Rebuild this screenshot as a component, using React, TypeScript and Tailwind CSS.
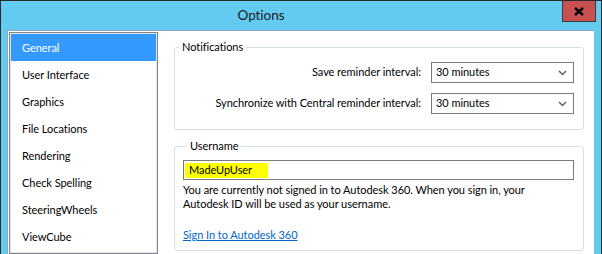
const pages = [
  'General',
  'User Interface',
  'Graphics',
  'File Locations',
  'Rendering',
  'Check Spelling',
  'SteeringWheels',
  'ViewCube',
];

function Chevron() {
  return (
    <svg width="9" height="6" viewBox="0 0 9 6" className="shrink-0">
      <polyline points="1,1 4.5,4.5 8,1" fill="none" stroke="#606060" strokeWidth="1.5" />
    </svg>
  );
}

function Select({ value }: { value: string }) {
  return (
    <div className="w-[143px] h-[21px] border border-[#7a7a7a] bg-white flex items-center justify-between pl-[4px] pr-[6px]">
      <span>{value}</span>
      <Chevron />
    </div>
  );
}

export default function App() {
  return (
    <div className="w-[602px] h-[254px] overflow-hidden bg-[#62cbef] border-t border-l border-r border-[#2b2b2b] flex flex-col font-['Lato',sans-serif] text-[11px] tracking-[-0.05px] text-black">
      {/* Title bar */}
      <div className="h-[29px] shrink-0 relative flex items-center justify-center pr-[80px]">
        <span className="text-[13.5px] text-[#1a1a1a]">Options</span>
        <div className="absolute top-[-1px] right-[5px] w-[34px] h-[22px] bg-[#c75050] border border-[#3c3c3c] flex items-center justify-center">
          <svg width="10" height="9" viewBox="0 0 10 9">
            <path d="M1,1 L9,8 M9,1 L1,8" stroke="#000" strokeWidth="2.4" />
          </svg>
        </div>
      </div>

      {/* Body */}
      <div className="flex-1 ml-[6px] mr-[7px] bg-white border-l border-t border-[#8fa9bb] flex">
        {/* Page list */}
        <div className="ml-[1px] mt-[1px] w-[149px] border border-[#828790] shrink-0">
          <div className="h-full border border-[#e3e3e3]">
            {pages.map((p, i) => (
              <div
                key={p}
                className={
                  i === 0
                    ? 'h-[27px] flex items-center pt-[2px] pl-[11px] bg-[#3399ff] text-white'
                    : 'h-[27px] flex items-center pt-[2px] pl-[11px]'
                }
              >
                {p}
              </div>
            ))}
          </div>
        </div>

        {/* Settings */}
        <div className="ml-[16px] mt-[8px] w-[410px] flex flex-col gap-[8px]">
          <fieldset className="border border-[#d5dfe5] rounded-[3px] pt-[7px] pr-[9px] pb-[15px] flex flex-col gap-[10px]">
            <legend className="ml-[4px] px-[3px] leading-[16px]">Notifications</legend>
            <div className="flex items-center justify-end gap-[10px]">
              <span>Save reminder interval:</span>
              <Select value="30 minutes" />
            </div>
            <div className="flex items-center justify-end gap-[10px]">
              <span>Synchronize with Central reminder interval:</span>
              <Select value="30 minutes" />
            </div>
          </fieldset>

          <fieldset className="border border-[#d5dfe5] rounded-[3px] pt-[6px] pl-[8px] pr-[9px] pb-[8px]">
            <legend className="ml-[4px] px-[3px] leading-[16px]">Username</legend>
            <div className="h-[20px] border border-[#7a7a7a] flex items-center px-[1px]">
              <span className="h-[15px] bg-[#ffff00] flex items-center pl-[4px] pr-[16px]">MadeUpUser</span>
            </div>
            <p className="mt-[3px] leading-[14px]">
              You are currently not signed in to Autodesk 360. When you sign in, your
              <br />
              Autodesk ID will be used as your username.
            </p>
            <a href="#" className="block mt-[16px] text-[#0066cc] underline leading-[15px]">
              Sign In to Autodesk 360
            </a>
          </fieldset>
        </div>
      </div>
    </div>
  );
}
